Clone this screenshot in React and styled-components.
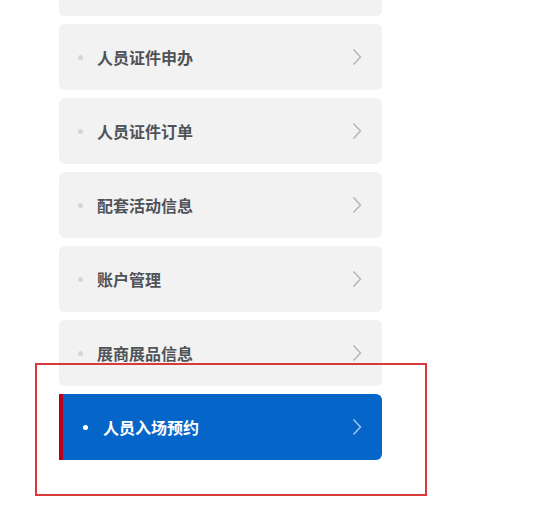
import React from "react";
import styled, { createGlobalStyle } from "styled-components";

const Global = createGlobalStyle`
  html, body { margin: 0; padding: 0; background: #fff; }
  body { font-family: "Noto Sans CJK SC", "Noto Sans", sans-serif; overflow: hidden; }
`;

const Page = styled.div`
  position: relative;
  width: 550px;
  height: 513px;
  overflow: hidden;
`;

const List = styled.ul`
  list-style: none;
  margin: -50px 0 0 59px;
  padding: 0;
  width: 323px;
  display: flex;
  flex-direction: column;
  gap: 8px;
`;

const Item = styled.li`
  height: 66px;
  box-sizing: border-box;
  display: flex;
  align-items: center;
  padding: ${(p) => (p.$active ? "0 20px 0 20px" : "0 20px 0 19px")};
  border-radius: ${(p) => (p.$active ? "0 6px 6px 0" : "6px")};
  background: ${(p) => (p.$active ? "#0565c8" : "#f2f2f2")};
  border-left: ${(p) => (p.$active ? "4px solid #b8001c" : "none")};
  color: ${(p) => (p.$active ? "#fff" : "#4f5358")};
`;

const Dot = styled.span`
  width: 5px;
  height: 5px;
  border-radius: 50%;
  background: ${(p) => (p.$active ? "#fff" : "#d6d6d6")};
  flex: none;
`;

const Label = styled.span`
  flex: 1;
  margin-left: ${(p) => (p.$active ? "15px" : "14px")};
  font-size: 16px;
  font-weight: 700;
  line-height: 1;
`;

const Chevron = ({ active }) => (
  <svg width="10" height="18" viewBox="0 0 10 18" style={{ flex: "none" }}>
    <path
      d="M1.5 1.5 L8.5 9 L1.5 16.5"
      fill="none"
      stroke={active ? "#a9c8ef" : "#b3b3b3"}
      strokeWidth="1.4"
    />
  </svg>
);

const Annotation = styled.div`
  position: absolute;
  left: 35px;
  top: 363px;
  width: 392px;
  height: 133px;
  box-sizing: border-box;
  border: 2px solid #d8393b;
  pointer-events: none;
`;

const items = [
  { label: "", hidden: true },
  { label: "人员证件申办" },
  { label: "人员证件订单" },
  { label: "配套活动信息" },
  { label: "账户管理" },
  { label: "展商展品信息" },
  { label: "人员入场预约", active: true },
];

export default function App() {
  return (
    <Page>
      <Global />
      <List>
        {items.map((it, i) => (
          <Item key={i} $active={it.active}>
            {!it.hidden && (
              <>
                <Dot $active={it.active} />
                <Label $active={it.active}>{it.label}</Label>
                <Chevron active={it.active} />
              </>
            )}
          </Item>
        ))}
      </List>
      <Annotation />
    </Page>
  );
}
